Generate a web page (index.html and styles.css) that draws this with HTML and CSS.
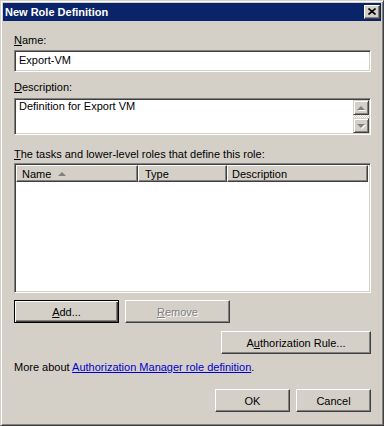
FILE: index.html
```html
<!DOCTYPE html>
<html lang="en">
<head>
    <meta charset="UTF-8">
    <meta name="viewport" content="width=device-width, initial-scale=1.0">
    <title>New Role Definition</title>
    <link rel="stylesheet" href="styles.css">
</head>
<body>
    <div class="window">
        <div class="title-bar">
            <span class="title-text">New Role Definition</span>
            <button class="close-btn" title="Close">
                <svg width="8" height="7" viewBox="0 0 8 7">
                    <path d="M0.5 0.5 L7.5 6.5 M7.5 0.5 L0.5 6.5" stroke="#000" stroke-width="1.6" fill="none"/>
                </svg>
            </button>
        </div>
        <div class="dialog-body">
            <div class="field-label"><u>N</u>ame:</div>
            <div class="text-field">Export-VM</div>

            <div class="field-label gap-top"><u>D</u>escription:</div>
            <div class="memo">
                <div class="memo-text">Definition for Export VM</div>
                <div class="vscroll">
                    <div class="scroll-btn"><span class="arrow-up"></span></div>
                    <div class="scroll-track"></div>
                    <div class="scroll-btn"><span class="arrow-down"></span></div>
                </div>
            </div>

            <div class="field-label tasks-label"><u>T</u>he tasks and lower-level roles that define this role:</div>
            <div class="list-view">
                <div class="list-header">
                    <div class="col-head col-name">Name <span class="sort-arrow"></span></div>
                    <div class="col-head col-type">Type</div>
                    <div class="col-head col-desc">Description</div>
                </div>
                <div class="list-body"></div>
            </div>

            <div class="button-row">
                <button class="btn btn-default"><u>A</u>dd...</button>
                <button class="btn btn-disabled"><u>R</u>emove</button>
            </div>
            <div class="button-row right auth-row">
                <button class="btn btn-wide">A<u>u</u>thorization Rule...</button>
            </div>
            <div class="more-about">More about <a href="#" class="help-link">Authorization Manager role definition</a>.</div>
            <div class="button-row right ok-row">
                <button class="btn">OK</button>
                <button class="btn">Cancel</button>
            </div>
        </div>
    </div>
</body>
</html>
```

FILE: styles.css
```css
body, html {
    margin: 0;
    padding: 0;
    background-color: #d4d0c8;
    font-family: "Liberation Sans", Arial, sans-serif;
    font-size: 11px;
    color: #000000;
}
.window {
    box-sizing: border-box;
    width: 384px;
    height: 426px;
    background-color: #d4d0c8;
    border: 1px solid;
    border-color: #d4d0c8 #404040 #404040 #d4d0c8;
    box-shadow: inset 1px 1px #ffffff, inset -1px -1px #808080;
    padding: 2px;
}
.title-bar {
    height: 18px;
    background-color: #0a246a;
    display: flex;
    align-items: center;
    justify-content: space-between;
    padding: 0 1px 0 2px;
}
.title-text {
    color: #ffffff;
    font-weight: bold;
    line-height: 18px;
}
.close-btn {
    box-sizing: border-box;
    width: 16px;
    height: 14px;
    padding: 0;
    background-color: #d4d0c8;
    border: 1px solid;
    border-color: #ffffff #404040 #404040 #ffffff;
    box-shadow: inset -1px -1px #808080;
    display: flex;
    align-items: center;
    justify-content: center;
}
.close-btn svg {
    display: block;
    margin: 0 1px 1px 0;
}
.dialog-body {
    padding: 13px 10px 0 11px;
}
.field-label {
    line-height: 13px;
}
.gap-top {
    margin-top: 9px;
}
.tasks-label {
    margin-top: 13px;
}
.text-field {
    box-sizing: border-box;
    height: 22px;
    margin-top: 3px;
    background-color: #ffffff;
    border: 1px solid;
    border-color: #808080 #ffffff #ffffff #808080;
    box-shadow: inset 1px 1px #404040, inset -1px -1px #d4d0c8;
    padding: 3px 4px 0 4px;
    line-height: 13px;
}
.memo {
    box-sizing: border-box;
    height: 37px;
    margin-top: 4px;
    background-color: #ffffff;
    border: 1px solid;
    border-color: #808080 #ffffff #ffffff #808080;
    box-shadow: inset 1px 1px #404040, inset -1px -1px #d4d0c8;
    padding: 1px;
    display: flex;
}
.memo-text {
    flex-grow: 1;
    padding: 0 3px;
    line-height: 13px;
}
.vscroll {
    width: 16px;
    display: flex;
    flex-direction: column;
}
.scroll-btn {
    box-sizing: border-box;
    height: 15px;
    background-color: #d4d0c8;
    border: 1px solid;
    border-color: #d4d0c8 #404040 #404040 #d4d0c8;
    box-shadow: inset 1px 1px #ffffff, inset -1px -1px #808080;
    display: flex;
    align-items: center;
    justify-content: center;
}
.scroll-track {
    flex-grow: 1;
    background: repeating-conic-gradient(#ffffff 0 25%, #d4d0c8 0 50%) 0 0 / 2px 2px;
}
.arrow-up, .arrow-down {
    width: 0;
    height: 0;
    border-left: 4px solid transparent;
    border-right: 4px solid transparent;
}
.arrow-up {
    border-bottom: 4px solid #808080;
    filter: drop-shadow(1px 1px 0 #ffffff);
}
.arrow-down {
    border-top: 4px solid #808080;
    filter: drop-shadow(1px 1px 0 #ffffff);
}
.list-view {
    box-sizing: border-box;
    height: 130px;
    margin-top: 2px;
    background-color: #ffffff;
    border: 1px solid;
    border-color: #808080 #ffffff #ffffff #808080;
    box-shadow: inset 1px 1px #404040, inset -1px -1px #d4d0c8;
    padding: 1px;
    display: flex;
    flex-direction: column;
}
.list-header {
    display: flex;
    height: 17px;
}
.col-head {
    box-sizing: border-box;
    height: 17px;
    background-color: #d4d0c8;
    border: 1px solid;
    border-color: #ffffff #404040 #404040 #ffffff;
    box-shadow: inset -1px -1px #808080;
    padding: 1px 0 0 5px;
    line-height: 13px;
    display: flex;
    align-items: center;
}
.col-name {
    width: 122px;
}
.col-type {
    width: 89px;
    padding-left: 6px;
}
.col-desc {
    width: 141px;
    padding-left: 4px;
}
.sort-arrow {
    width: 0;
    height: 0;
    margin-left: 7px;
    border-left: 4px solid transparent;
    border-right: 4px solid transparent;
    border-bottom: 4px solid #808080;
}
.list-body {
    flex-grow: 1;
}
.button-row {
    display: flex;
    gap: 6px;
    margin-top: 7px;
}
.button-row.right {
    justify-content: flex-end;
}
.auth-row {
    margin-top: 8px;
}
.ok-row {
    margin-top: 15px;
}
.btn {
    box-sizing: border-box;
    width: 75px;
    height: 23px;
    padding: 0;
    font-family: "Liberation Sans", Arial, sans-serif;
    font-size: 11px;
    color: #000000;
    background-color: #d4d0c8;
    border: 1px solid;
    border-color: #ffffff #404040 #404040 #ffffff;
    box-shadow: inset -1px -1px #808080;
}
.button-row .btn-default,
.button-row .btn-disabled {
    width: 105px;
}
.btn-default {
    border-color: #000000;
    box-shadow: inset 1px 1px #ffffff, inset -1px -1px #404040, inset -2px -2px #808080;
}
.btn-disabled {
    color: #808080;
    text-shadow: 1px 1px 0 #ffffff;
}
.btn-wide {
    width: 150px;
}
.more-about {
    margin-top: 7px;
    line-height: 13px;
}
.help-link {
    color: #0000cc;
    text-decoration: underline;
}
```
